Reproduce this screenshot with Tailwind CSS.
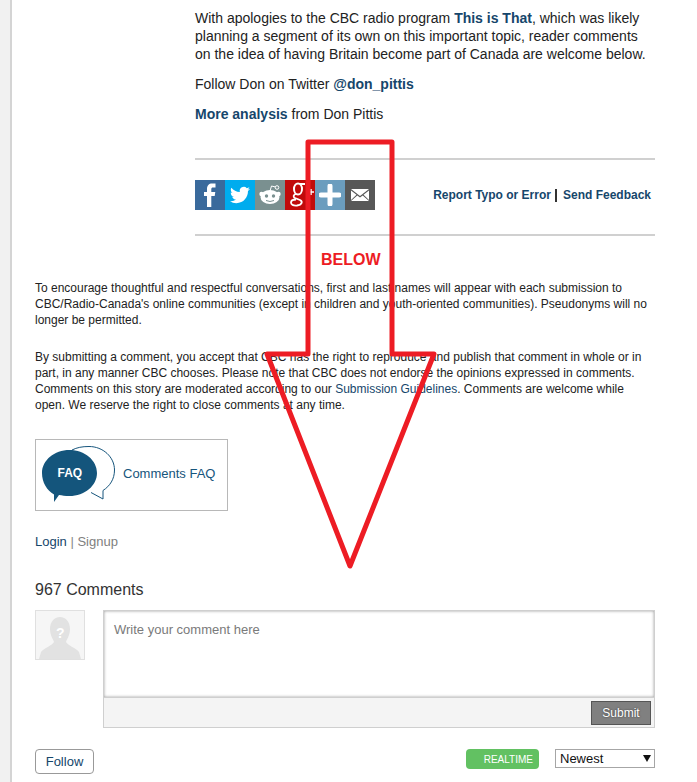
<!DOCTYPE html>
<html lang="en">

<head>
    <meta charset="UTF-8">
    <title>Comments</title>
    <script src="https://cdn.jsdelivr.net/npm/@tailwindcss/browser@4"></script>
</head>

<body class="bg-white font-['Liberation_Sans',Arial,sans-serif] text-[#222]">
    <div class="relative h-[782px] w-[697px] overflow-hidden">
        <div class="flex h-full">
            <div class="w-[12px] shrink-0 border-r-2 border-[#d4d4d4] bg-[#f1f1f1]"></div>
            <main class="w-[643px] pl-[23px]">
                <!-- story end -->
                <section class="ml-[160px] w-[460px] pt-[9px] text-[14px] leading-[18px]">
                    <p>With apologies to the CBC radio program <b class="text-[#16466b]">This is That</b>, which was likely planning a segment of its own on this important topic, reader comments on the idea of having Britain become part of Canada are welcome below.</p>
                    <p class="mt-[12px]">Follow Don on Twitter <b class="text-[#16466b]">@don_pittis</b></p>
                    <p class="mt-[12px]"><b class="text-[#16466b]">More analysis</b> from Don Pittis</p>
                    <div class="mt-[35px] flex h-[78px] items-center justify-between border-y-2 border-[#d0d0d0] pb-[4px]">
                        <div class="flex">
                            <div class="flex h-[30px] w-[30px] items-center justify-center bg-[#3a6a9c]">
                                <svg width="30" height="30" viewBox="0 0 30 30"><path fill="#fff" d="M12 27V16H9v-4h3V9c0-3.500 2-5.500 5-5.500h3.500v4H18c-1.200 0-1.700.6-1.700 1.800V12h4l-.6 4h-3.400v11z"/></svg>
                            </div>
                            <div class="flex h-[30px] w-[30px] items-center justify-center bg-[#00acee]">
                                <svg width="24" height="20" viewBox="0 0 24 24"><path fill="#fff" d="M23.950 4.570a10 10 0 0 1-2.820.77 4.960 4.960 0 0 0 2.160-2.720 9.900 9.900 0 0 1-3.120 1.180 4.920 4.920 0 0 0-8.380 4.480C7.690 8.100 4.070 6.130 1.640 3.160a4.820 4.820 0 0 0-.67 2.480c0 1.710.87 3.210 2.190 4.100a4.900 4.900 0 0 1-2.230-.62v.06a4.920 4.920 0 0 0 3.950 4.830 5 5 0 0 1-2.210.08 4.940 4.940 0 0 0 4.600 3.420A9.870 9.870 0 0 1 0 19.540a14 14 0 0 0 7.560 2.210c9.050 0 14-7.500 14-13.980 0-.21 0-.42-.02-.63a9.940 9.940 0 0 0 2.460-2.550z"/></svg>
                            </div>
                            <div class="flex h-[30px] w-[30px] items-center justify-center bg-[#7a9090]">
                                <svg width="30" height="30" viewBox="0 0 30 30"><ellipse cx="15" cy="17" rx="9.500" ry="7" fill="#fff"/><circle cx="6.500" cy="14" r="2.200" fill="#fff"/><circle cx="23.500" cy="14" r="2.200" fill="#fff"/><circle cx="22" cy="7.500" r="1.800" fill="none" stroke="#fff"/><path d="M15 11l1.500-5 4 1" fill="none" stroke="#fff"/><circle cx="11.500" cy="16" r="1.700" fill="#7a9090"/><circle cx="18.500" cy="16" r="1.700" fill="#7a9090"/><path d="M11 20.500q4 2 8 0" fill="none" stroke="#7a9090"/></svg>
                            </div>
                            <div class="flex h-[30px] w-[30px] items-start bg-[#c10b0b]">
                                <svg width="30" height="30" viewBox="0 0 30 30" fill="none" stroke="#fff">
                                    <ellipse cx="13" cy="9" rx="4" ry="5.500" stroke-width="2"/>
                                    <path d="M15 4h5M11 14c-3 1-3 3-1 4l5 2c3 1.500 2 5-3 5.500-4 .3-6-1-6-3 0-1.500 1.500-3 5-3" stroke-width="1.800"/>
                                    <path d="M23 12h6M26 9v6" stroke-width="1.500"/>
                                </svg>
                            </div>
                            <div class="flex h-[30px] w-[30px] items-center justify-center bg-[#6b9dbe]">
                                <svg width="22" height="22" viewBox="0 0 22 22"><path d="M11 2v18M2 11h18" stroke="#fff" stroke-width="5" stroke-linecap="round"/></svg>
                            </div>
                            <div class="flex h-[30px] w-[30px] items-center justify-center bg-[#575757]">
                                <svg width="20" height="14" viewBox="0 0 20 14"><path fill="#fff" d="M1 1h18l-9 7zM1 2.500l5.500 4.300L1 12zM19 2.500l-5.500 4.300L19 12zM7.300 7.500 10 9.600l2.700-2.100L19 13H1z"/></svg>
                            </div>
                        </div>
                        <div class="mr-[4px] flex items-center text-[12px] font-bold text-[#16466b]">
                            <span>Report Typo or Error</span>
                            <span class="mr-[6px] ml-[4px] h-[13px] border-l-2 border-[#333]"></span>
                            <span>Send Feedback</span>
                        </div>
                    </div>
                </section>

                <!-- comment policy -->
                <section class="mt-[14px] w-[620px] text-[12px] leading-[16px]">
                    <p class="mb-[4px] ml-[286px] text-[16px] leading-[20px] font-bold text-[#ed1c24]">BELOW</p>
                    <p class="mt-[10px]">To encourage thoughtful and respectful conversations, first and last names will appear with each submission to CBC/Radio-Canada's online communities (except in children and youth-oriented communities). Pseudonyms will no longer be permitted.</p>
                    <p class="mt-[21px]">By submitting a comment, you accept that CBC has the right to reproduce and publish that comment in whole or in part, in any manner CBC chooses. Please note that CBC does not endorse the opinions expressed in comments. Comments on this story are moderated according to our <span class="text-[#16466b]">Submission Guidelines</span>. Comments are welcome while open. We reserve the right to close comments at any time.</p>
                </section>

                <div class="mt-[26px] flex h-[72px] w-[193px] items-center border border-[#b8b8b8] pl-[6px]">
                    <svg class="shrink-0" width="74" height="58" viewBox="0 0 74 58">
                        <path fill="#fff" stroke="#16557c" stroke-width="1" d="M30 4C35 1.500 40 .5 47 .5C61 .5 72.500 11 72.500 24C72.500 33 68 40 61 44.500V53L49 46.500"/>
                        <path fill="#14557c" d="M27.500 4C42.700 4 55 14.300 55 27S42.700 50 27.500 50C23 50 20 49.500 17 49L12 56V48.500C5 44.500 0 36.500 0 27 0 14.300 12.300 4 27.500 4z"/>
                        <text x="15.500" y="31" fill="#fff" font-size="12" font-weight="700" font-family="Liberation Sans, sans-serif">FAQ</text>
                    </svg>
                    <span class="ml-[7px] -mt-[3px] text-[13px] text-[#16557c]">Comments FAQ</span>
                </div>

                <p class="mt-[22px] text-[13px] leading-[18px] text-[#16466b]">Login <span class="text-[#888]">|</span> <span class="text-[#808080]">Signup</span></p>

                <h2 class="mt-[29px] text-[16px] leading-[20px] text-[#333]">967 Comments</h2>

                <div class="mt-[10px] flex items-start">
                    <div class="h-[50px] w-[50px] overflow-hidden border border-[#e0e0e0] bg-[#f6f6f6]">
                        <svg width="48" height="48" viewBox="0 0 48 48">
                            <path fill="#e2e2e2" d="M24 6c6 0 10 5 10 12 0 6-3 10-4 13 2 4 9 5 13 10l2 7H3l2-7c4-5 11-6 13-10-1-3-4-7-4-13 0-7 4-12 10-12z"/>
                            <text x="20" y="27" fill="#fff" font-size="14" font-weight="700" font-family="Liberation Sans, sans-serif">?</text>
                        </svg>
                    </div>
                    <div class="ml-[18px] w-[552px] border border-[#cfcfcf]">
                        <div class="h-[87px] border-b border-[#cfcfcf] px-[10px] py-[10px] text-[13px] leading-[18px] text-[#7a7a7a] shadow-[inset_0_0_3px_#999]">Write your comment here</div>
                        <div class="flex h-[29px] items-center justify-end bg-[#f4f4f4] pr-[3px]">
                            <button class="h-[24px] w-[60px] border border-[#555] bg-[#808080] text-[12px] text-white [text-shadow:0_0_2px_#333]">Submit</button>
                        </div>
                    </div>
                </div>

                <div class="mt-[21px] flex items-start">
                    <button class="h-[25px] w-[59px] rounded-[4px] border border-[#999] text-[13px] text-[#16466b]">Follow</button>
                    <div class="ml-[372px] flex h-[20px] w-[73px] items-center justify-end rounded-[4px] bg-[#62c162] pr-[6px] text-[10px] text-white">REALTIME</div>
                    <div class="ml-[16px] flex h-[19px] w-[100px] items-center justify-between border border-[#a6a6a6] pl-[4px] pr-[3px] text-[13px] text-[#111]">
                        <span>Newest</span>
                        <svg width="8" height="7" viewBox="0 0 8 7"><path d="M0 0h8L4 7z" fill="#111"/></svg>
                    </div>
                </div>
            </main>
        </div>

        <!-- hand drawn arrow on top of the page -->
        <svg class="absolute top-0 left-0" width="697" height="782" viewBox="0 0 697 782" fill="none">
            <path d="M308 142H392V354H434L350 566L267 354H308Z" stroke="#ed1c24" stroke-width="5" stroke-linejoin="round"/>
        </svg>
    </div>
</body>

</html>
